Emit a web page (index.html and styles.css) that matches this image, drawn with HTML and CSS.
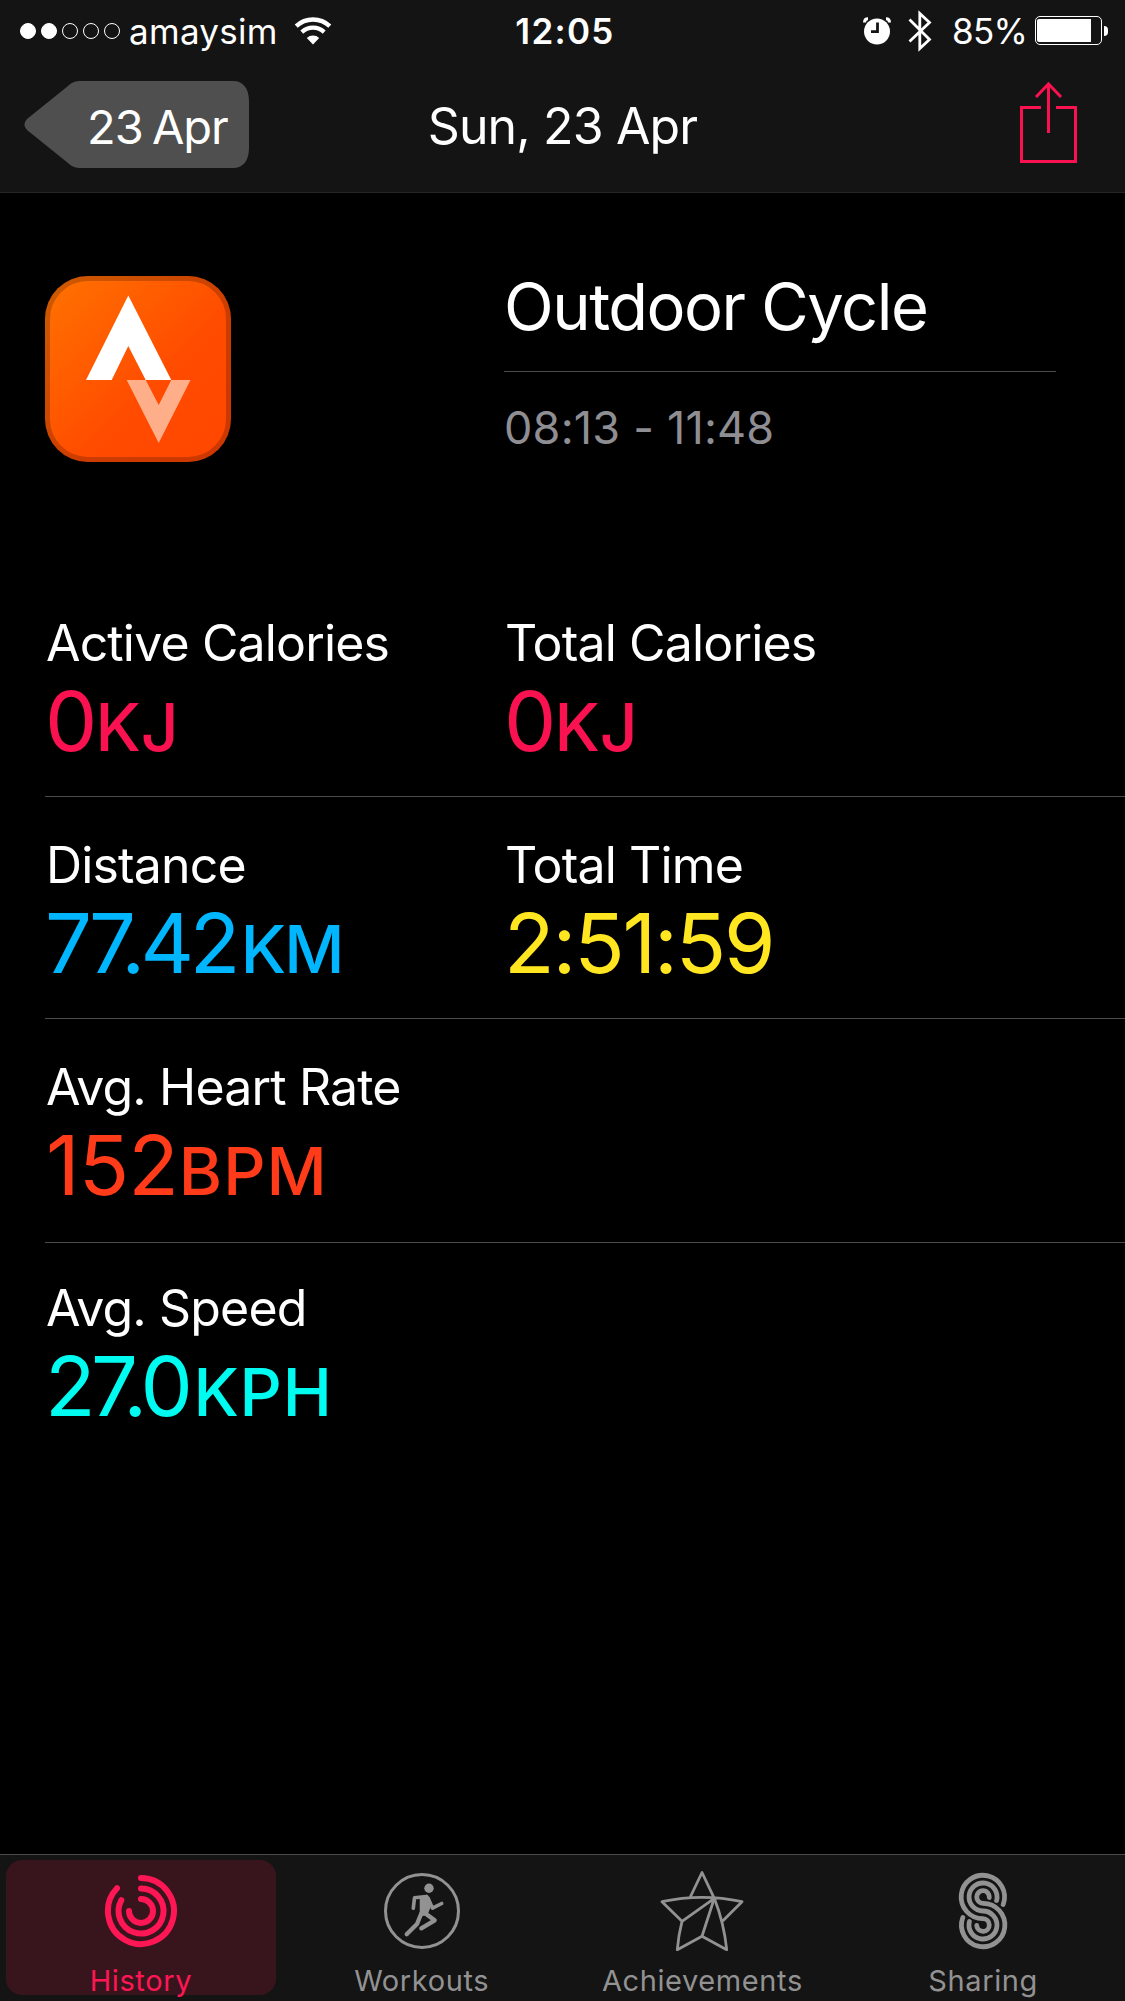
FILE: index.html
```html
<!DOCTYPE html>
<html lang="en">
  <head>
    <meta charset="UTF-8" />
    <meta name="viewport" content="width=device-width, initial-scale=1.0" />
    <title>Sun, 23 Apr - Activity</title>
    <link rel="stylesheet" href="styles.css">
  </head>
  <body>
    <header>
      <div class="status">
        <div class="status-left">
          <div class="signal">
            <span class="dot on"></span>
            <span class="dot on"></span>
            <span class="dot"></span>
            <span class="dot"></span>
            <span class="dot"></span>
          </div>
          <p class="carrier">amaysim</p>
          <svg class="wifi" width="38" height="28" viewBox="0 0 38 28" fill="none" stroke="#fff">
            <path d="M2.2 9.2a24.6 24.6 0 0 1 33.6 0" stroke-width="4.4" />
            <path d="M7.8 15.1a16.4 16.4 0 0 1 22.4 0" stroke-width="4.2" />
            <path d="M19 27.5L12.8 21a9 9 0 0 1 12.4 0z" fill="#fff" stroke="none" />
          </svg>
        </div>
        <p class="clock">12:05</p>
        <div class="status-right">
          <svg class="alarm" width="28" height="28" viewBox="0 0 28 28">
            <circle cx="14" cy="14.5" r="13" fill="#fff" />
            <path d="M1.5 5.5Q1.5 1.8 5 1.8M26.5 5.5Q26.5 1.8 23 1.8" fill="none" stroke="#fff" stroke-width="3" />
            <path d="M14.5 5.5v9.2h-6.5" fill="none" stroke="#141414" stroke-width="2.8" />
          </svg>
          <svg class="bluetooth" width="24" height="42" viewBox="0 0 24 42" fill="none" stroke="#fff" stroke-width="2.8">
            <path d="M1.5 9.5L21.5 29.5L11.8 38.5V3.5L21.5 12.5L1.5 31.5" />
          </svg>
          <p class="percent">85%</p>
          <div class="battery"><div class="charge" style="width: 85%"></div></div>
          <div class="battery-tip"></div>
        </div>
      </div>
      <nav>
        <a class="back" href="#">23 Apr</a>
        <h1>Sun, 23 Apr</h1>
        <a class="share" href="#">
          <svg width="58" height="84" viewBox="0 0 58 84" fill="none" stroke="#fa114f" stroke-width="3">
            <path d="M21 26.5H1.5V80.5H55.5V26.5H36" />
            <path d="M28.5 52V4M16 16L28.5 3L41 16" />
          </svg>
        </a>
      </nav>
    </header>

    <main>
      <section class="summary">
        <svg class="app-icon" width="186" height="186" viewBox="0 0 186 186">
          <defs>
            <linearGradient id="orange" x1="0" y1="0" x2="1" y2="1">
              <stop offset="0" stop-color="#ff7300" />
              <stop offset="0.6" stop-color="#ff4b00" />
              <stop offset="1" stop-color="#ff4600" />
            </linearGradient>
          </defs>
          <rect width="186" height="186" rx="43" fill="url(#orange)" />
          <rect x="2.5" y="2.5" width="181" height="181" rx="40.5" fill="none" stroke="#000" stroke-opacity="0.2" stroke-width="5" />
          <path d="M83.3 19.5L126.3 104H100.7L83.3 70L66.7 104H41z" fill="#fff" />
          <path d="M81.7 104H100.7L113.7 129L126.3 104H145.5L113.7 167z" fill="#ffae8a" />
        </svg>
        <div class="info">
          <h2>Outdoor Cycle</h2>
          <p class="time">08:13 - 11:48</p>
        </div>
      </section>

      <section class="stats">
        <div class="row">
          <div class="stat energy">
            <p class="label">Active Calories</p>
            <p class="value">0<span class="unit">KJ</span></p>
          </div>
          <div class="stat energy">
            <p class="label">Total Calories</p>
            <p class="value">0<span class="unit">KJ</span></p>
          </div>
        </div>
        <div class="row">
          <div class="stat distance">
            <p class="label">Distance</p>
            <p class="value">77.42<span class="unit">KM</span></p>
          </div>
          <div class="stat duration">
            <p class="label">Total Time</p>
            <p class="value">2:51:59</p>
          </div>
        </div>
        <div class="row">
          <div class="stat heart">
            <p class="label">Avg. Heart Rate</p>
            <p class="value">152<span class="unit">BPM</span></p>
          </div>
        </div>
        <div class="row">
          <div class="stat speed">
            <p class="label">Avg. Speed</p>
            <p class="value">27.0<span class="unit">KPH</span></p>
          </div>
        </div>
      </section>
    </main>

    <footer>
      <a class="tab selected" href="#">
        <svg width="80" height="80" viewBox="-40 -40 80 80" fill="none" stroke="currentColor" stroke-width="6" stroke-linecap="round">
          <path d="M0 -33A33 33 0 1 1 -24 -22.7" />
          <path d="M0 -22.5A22.5 22.5 0 1 1 -19.7 -10.8" />
          <path d="M0 -12A12 12 0 1 1 -12 0" />
        </svg>
        <p>History</p>
      </a>
      <a class="tab" href="#">
        <svg width="80" height="80" viewBox="-40 -40 80 80" fill="none" stroke="currentColor" stroke-linecap="round" stroke-linejoin="round">
          <circle r="36.5" stroke-width="3" />
          <circle cx="7" cy="-22.7" r="4.7" fill="currentColor" stroke="none" />
          <path d="M-1 -13.5L5 -15L8.5 -7L4.500 3L-1 4Z" fill="currentColor" stroke-width="2.5" />
          <path d="M4.5 -14.5L-7.5 -13.3L-8.7 -2.7M6 -13L10.5 -2.8L19.7 -7.5" stroke-width="3.6" />
          <path d="M-0.5 2L-5 13L-15.3 23.3M2 1.5L12.7 9.3L-0.7 17.3" stroke-width="4.3" />
        </svg>
        <p>Workouts</p>
      </a>
      <a class="tab" href="#">
        <svg width="84" height="80" viewBox="-43 -40 84 80" fill="none" stroke="currentColor" stroke-width="2.8" stroke-linejoin="round">
          <path d="M-12.7 -14L-1 -38.5L11.3 -12.7Q21 12 23.7 38.7L-1 25.3L-25.7 38.7Q-24.5 24 -21 10.3L-41 -9.3Q-1 -18 39 -9.3L19.7 10" />
          <path d="M-21 10.3L11.3 -12.7L-1 25.3" />
        </svg>
        <p>Achievements</p>
      </a>
      <a class="tab" href="#">
        <svg width="80" height="80" viewBox="-40 -40 80 80" fill="none" stroke="currentColor" stroke-width="4.8" stroke-linecap="round">
          <path d="M20.2 -6.5A21.7 21.7 0 1 0 0 7.7A6.3 6.3 0 1 1 -6.3 14.5" />
          <path d="M13.6 -10.5A14 14 0 1 0 0 0A14 14 0 1 1 -13.6 10.5" />
          <path d="M6.3 -13.5A6.3 6.3 0 1 0 0 -7.7A21.7 21.7 0 1 1 -20.2 6.5" />
        </svg>
        <p>Sharing</p>
      </a>
    </footer>
  </body>
</html>
```
FILE: styles.css
```css
* {
  margin: 0;
  padding: 0;
  box-sizing: border-box;
}

body {
  display: flex;
  flex-direction: column;
  height: 2001px;
  background-color: #000;
  color: #fff;
  font-family: Inter, "Liberation Sans", sans-serif;
}

a {
  text-decoration: none;
  color: inherit;
}

svg {
  display: block;
  flex: none;
}

header {
  height: 193px;
  background-color: #141414;
  border-bottom: 1px solid #262626;
}

.status {
  display: grid;
  grid-template-columns: 1fr auto 1fr;
  align-items: center;
  height: 60px;
  padding: 0 17px 0 20px;
  font-size: 35px;
  line-height: 60px;
}

.status-left,
.status-right {
  display: flex;
  align-items: center;
}

.status-right {
  justify-content: flex-end;
}

.carrier,
.clock,
.percent {
  padding-top: 1px;
}

.signal {
  display: flex;
  gap: 5px;
}

.dot {
  width: 16px;
  height: 16px;
  border: 1px solid #fff;
  border-radius: 50%;
}
.dot.on {
  background-color: #fff;
}

.carrier {
  margin-left: 9px;
  letter-spacing: 0.3px;
}

.wifi {
  margin-left: 16px;
}

.clock {
  padding-left: 2px;
  font-weight: 600;
  letter-spacing: 1.3px;
}

.alarm {
  margin-right: 17px;
}

.bluetooth {
  margin-right: 20px;
}

.percent {
  letter-spacing: -0.8px;
}

.battery {
  width: 67px;
  height: 29px;
  margin-left: 8px;
  padding: 2px 1px;
  border: 1px solid #fff;
  border-radius: 5px;
}

.charge {
  height: 100%;
  border-radius: 2px 0 0 2px;
  background-color: #fff;
}

.battery-tip {
  width: 4px;
  height: 10px;
  margin-left: 2px;
  border-radius: 0 5px 5px 0;
  background-color: #fff;
}

nav {
  display: grid;
  grid-template-columns: 1fr auto 1fr;
  align-items: start;
  height: 132px;
  padding: 21px 24px 0;
}

.back {
  width: 225px;
  height: 87px;
  padding: 5px 0 0 63px;
  background-color: #4f4f4f;
  clip-path: path("M57 0H209C219 0 225 7 225 20V67C225 80 219 87 209 87H57C52 87 48 86 44 82L3 49Q-2 43.5 3 38L44 5C48 1 52 0 57 0Z");
  font-size: 47px;
  line-height: 82px;
  letter-spacing: -1px;
  word-spacing: -3px;
}

h1 {
  font-size: 50px;
  font-weight: 400;
  line-height: 90px;
  letter-spacing: -0.85px;
}

.share {
  justify-self: end;
  margin-right: 23px;
}

.summary {
  display: grid;
  grid-template-columns: 459px 552px;
  align-items: start;
  height: 382px;
  padding: 74px 0 0 45px;
}

.app-icon {
  margin-top: 9px;
}

h2 {
  padding-bottom: 24px;
  border-bottom: 1px solid #4b4b4b;
  font-size: 65px;
  font-weight: 400;
  line-height: 80px;
  letter-spacing: -1.5px;
}

.time {
  margin-top: 29px;
  color: #8e8e93;
  font-size: 45px;
  line-height: 54px;
  letter-spacing: 0.2px;
}

.row {
  display: grid;
  grid-template-columns: 459px 1fr;
  margin-left: 45px;
  padding: 38px 0 30px;
  border-bottom: 1px solid #4b4b4b;
}
.row:nth-child(3) {
  padding-bottom: 32px;
}
.row:last-child {
  padding-top: 35px;
  border-bottom: none;
}

.label {
  padding-left: 1px;
  font-size: 50px;
  line-height: 60px;
  letter-spacing: -0.85px;
}

.value {
  height: 90px;
  margin-top: 3px;
  font-size: 83px;
  line-height: 90px;
}

.unit {
  margin-left: -2px;
  font-size: 66px;
  font-weight: 500;
  line-height: 0;
  letter-spacing: 0;
}

.energy .value {
  color: #fa114f;
}

.distance .value {
  color: #00b7ff;
  letter-spacing: -4.5px;
}
.distance .unit {
  margin-left: 5px;
  letter-spacing: -2px;
}

.duration .value {
  color: #ffe620;
  letter-spacing: -2.2px;
}

.heart .value {
  padding-left: 1px;
  color: #ff3b1a;
  letter-spacing: -1px;
}
.heart .unit {
  margin-left: 1px;
  letter-spacing: 1px;
}

.speed .value {
  color: #00fbf0;
  letter-spacing: -4.5px;
}
.speed .unit {
  margin-left: 5px;
  letter-spacing: 0.8px;
}

footer {
  display: grid;
  grid-template-columns: repeat(4, 1fr);
  height: 147px;
  margin-top: auto;
  padding: 5px 2px 5px 0;
  border-top: 1px solid #4b4b4b;
  background-color: #141414;
}

.tab {
  display: flex;
  flex-direction: column;
  align-items: center;
  height: 135px;
  margin: 0 5px 0 6px;
  padding-top: 11px;
  border-radius: 16px;
  color: #929292;
  font-size: 29px;
  line-height: 34px;
  letter-spacing: 0.6px;
}
.tab.selected {
  background-color: #38151d;
  color: #ff1654;
}

.tab p {
  margin-top: 13px;
}
```
